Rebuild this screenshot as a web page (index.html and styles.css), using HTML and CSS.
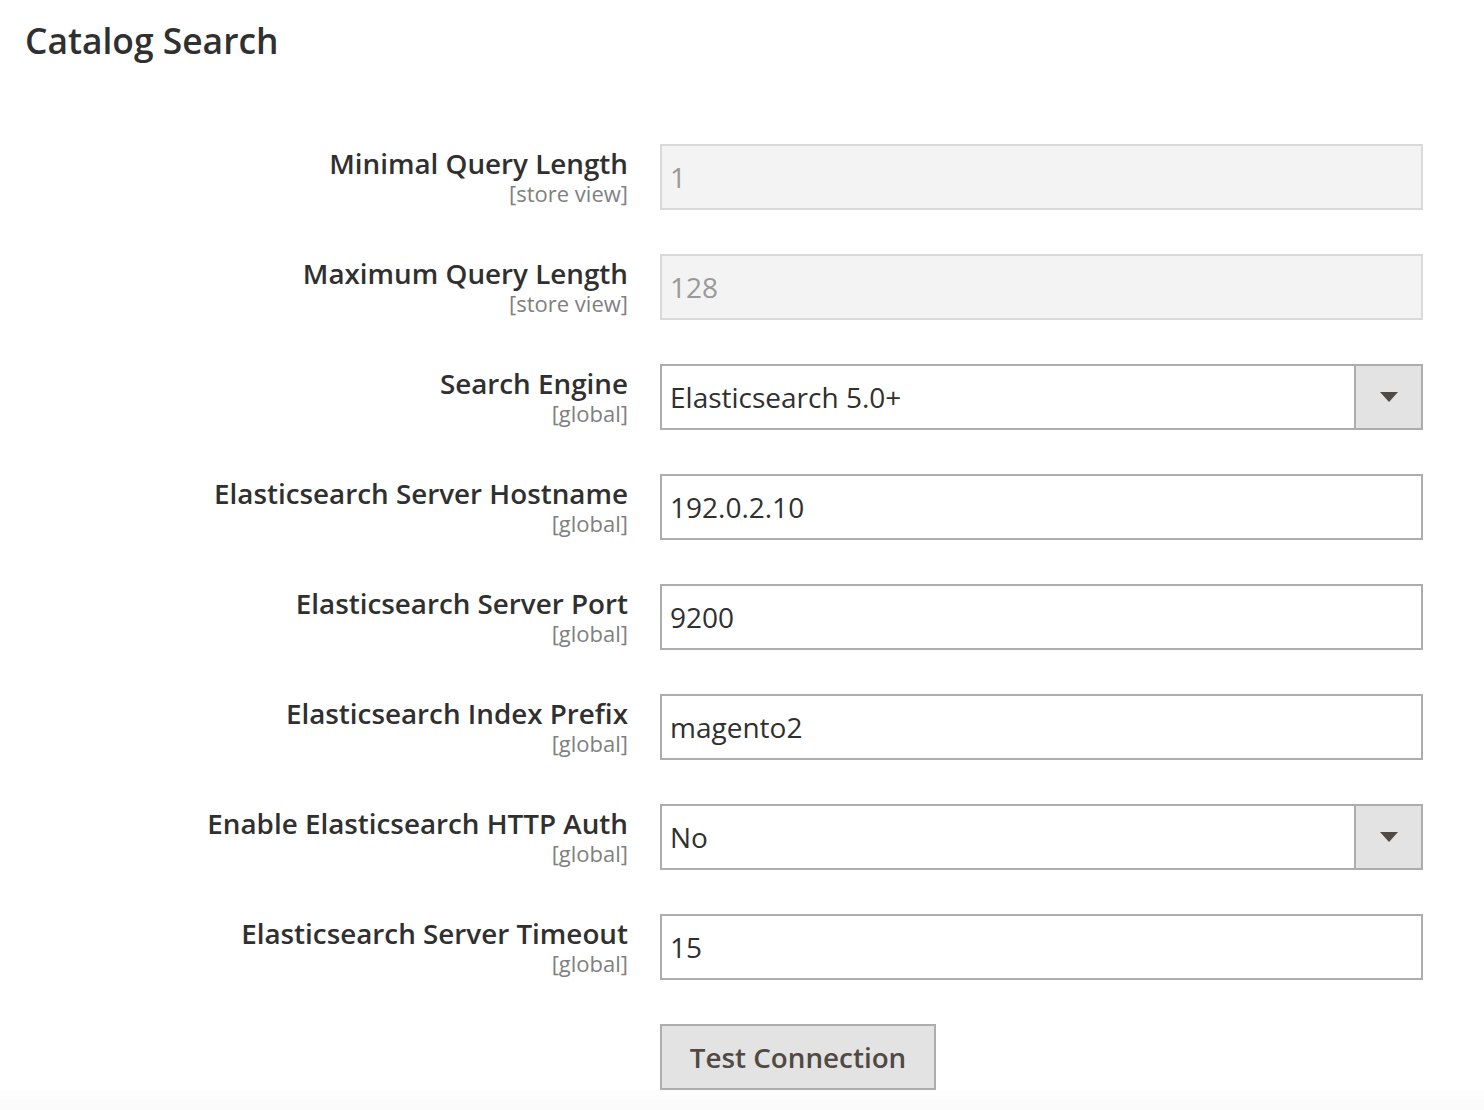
FILE: index.html
```html
<!DOCTYPE html>
<html lang="en">
<head>
<meta charset="utf-8">
<title>Catalog Search</title>
<link rel="stylesheet" href="styles.css">
</head>
<body>
<div class="page">
  <h1 class="title">Catalog Search</h1>
  <div class="form">
    <div class="row">
      <div class="label"><span class="name">Minimal Query Length</span><span class="scope">[store view]</span></div>
      <div class="control"><div class="input disabled">1</div></div>
    </div>
    <div class="row">
      <div class="label"><span class="name">Maximum Query Length</span><span class="scope">[store view]</span></div>
      <div class="control"><div class="input disabled">128</div></div>
    </div>
    <div class="row">
      <div class="label"><span class="name">Search Engine</span><span class="scope">[global]</span></div>
      <div class="control"><div class="input select"><span class="value">Elasticsearch 5.0+</span><span class="arrow"><svg width="18" height="10" viewBox="0 0 18 10"><path d="M0 0 H18 L9 10 Z" fill="#514943"/></svg></span></div></div>
    </div>
    <div class="row">
      <div class="label"><span class="name">Elasticsearch Server Hostname</span><span class="scope">[global]</span></div>
      <div class="control"><div class="input">192.0.2.10</div></div>
    </div>
    <div class="row">
      <div class="label"><span class="name">Elasticsearch Server Port</span><span class="scope">[global]</span></div>
      <div class="control"><div class="input">9200</div></div>
    </div>
    <div class="row">
      <div class="label"><span class="name">Elasticsearch Index Prefix</span><span class="scope">[global]</span></div>
      <div class="control"><div class="input">magento2</div></div>
    </div>
    <div class="row">
      <div class="label"><span class="name">Enable Elasticsearch HTTP Auth</span><span class="scope">[global]</span></div>
      <div class="control"><div class="input select"><span class="value">No</span><span class="arrow"><svg width="18" height="10" viewBox="0 0 18 10"><path d="M0 0 H18 L9 10 Z" fill="#514943"/></svg></span></div></div>
    </div>
    <div class="row">
      <div class="label"><span class="name">Elasticsearch Server Timeout</span><span class="scope">[global]</span></div>
      <div class="control"><div class="input">15</div></div>
    </div>
    <div class="row">
      <div class="label"></div>
      <div class="control"><button class="button">Test Connection</button></div>
    </div>
  </div>
</div>
</body>
</html>
```
FILE: styles.css
```css
html, body {
  margin: 0;
  padding: 0;
  background: #ffffff;
}
body {
  font-family: "Open Sans", "Noto Sans", sans-serif;
  color: #303030;
}
.page {
  padding: 0 0 20px 0;
  min-height: 1110px;
  box-sizing: border-box;
  background: linear-gradient(to bottom, #ffffff 0, #ffffff 1090px, #fdfdfd 1090px, #fdfdfd 1100px, #fbfbfb 1100px);
}
.title {
  margin: 0;
  padding: 17px 0 0 25px;
  font-size: 35.4px;
  font-weight: 600;
  line-height: 46px;
  color: #303030;
}
.form {
  padding-top: 81px;
  display: flex;
  flex-direction: column;
  gap: 44px;
}
.row {
  display: grid;
  grid-template-columns: 628px 763px;
  column-gap: 32px;
  align-items: start;
}
.label {
  display: flex;
  flex-direction: column;
  align-items: flex-end;
  text-align: right;
  padding-top: 1px;
}
.name {
  font-size: 27.8px;
  font-weight: 600;
  line-height: 36px;
  color: #303030;
}
.scope {
  font-size: 22px;
  line-height: 24px;
  color: #808080;
}
.input {
  box-sizing: border-box;
  height: 66px;
  border: 2px solid #adadad;
  background: #ffffff;
  padding: 0 8px;
  font-size: 28px;
  line-height: 62px;
  color: #303030;
  display: flex;
  align-items: center;
}
.input.disabled {
  background: #f3f3f3;
  border-color: #d9d9d9;
  color: #999999;
}
.input.select {
  padding-right: 0;
}
.value {
  flex: 1;
}
.arrow {
  width: 67px;
  height: 62px;
  box-sizing: border-box;
  border-left: 2px solid #adadad;
  background: #e3e3e3;
  display: flex;
  align-items: center;
  justify-content: center;
}
.button {
  box-sizing: border-box;
  height: 66px;
  width: 276px;
  border: 2px solid #adadad;
  background: #e3e3e3;
  color: #514943;
  font-family: "Open Sans", "Noto Sans", sans-serif;
  font-size: 27.8px;
  font-weight: 600;
  padding: 0;
}
```
